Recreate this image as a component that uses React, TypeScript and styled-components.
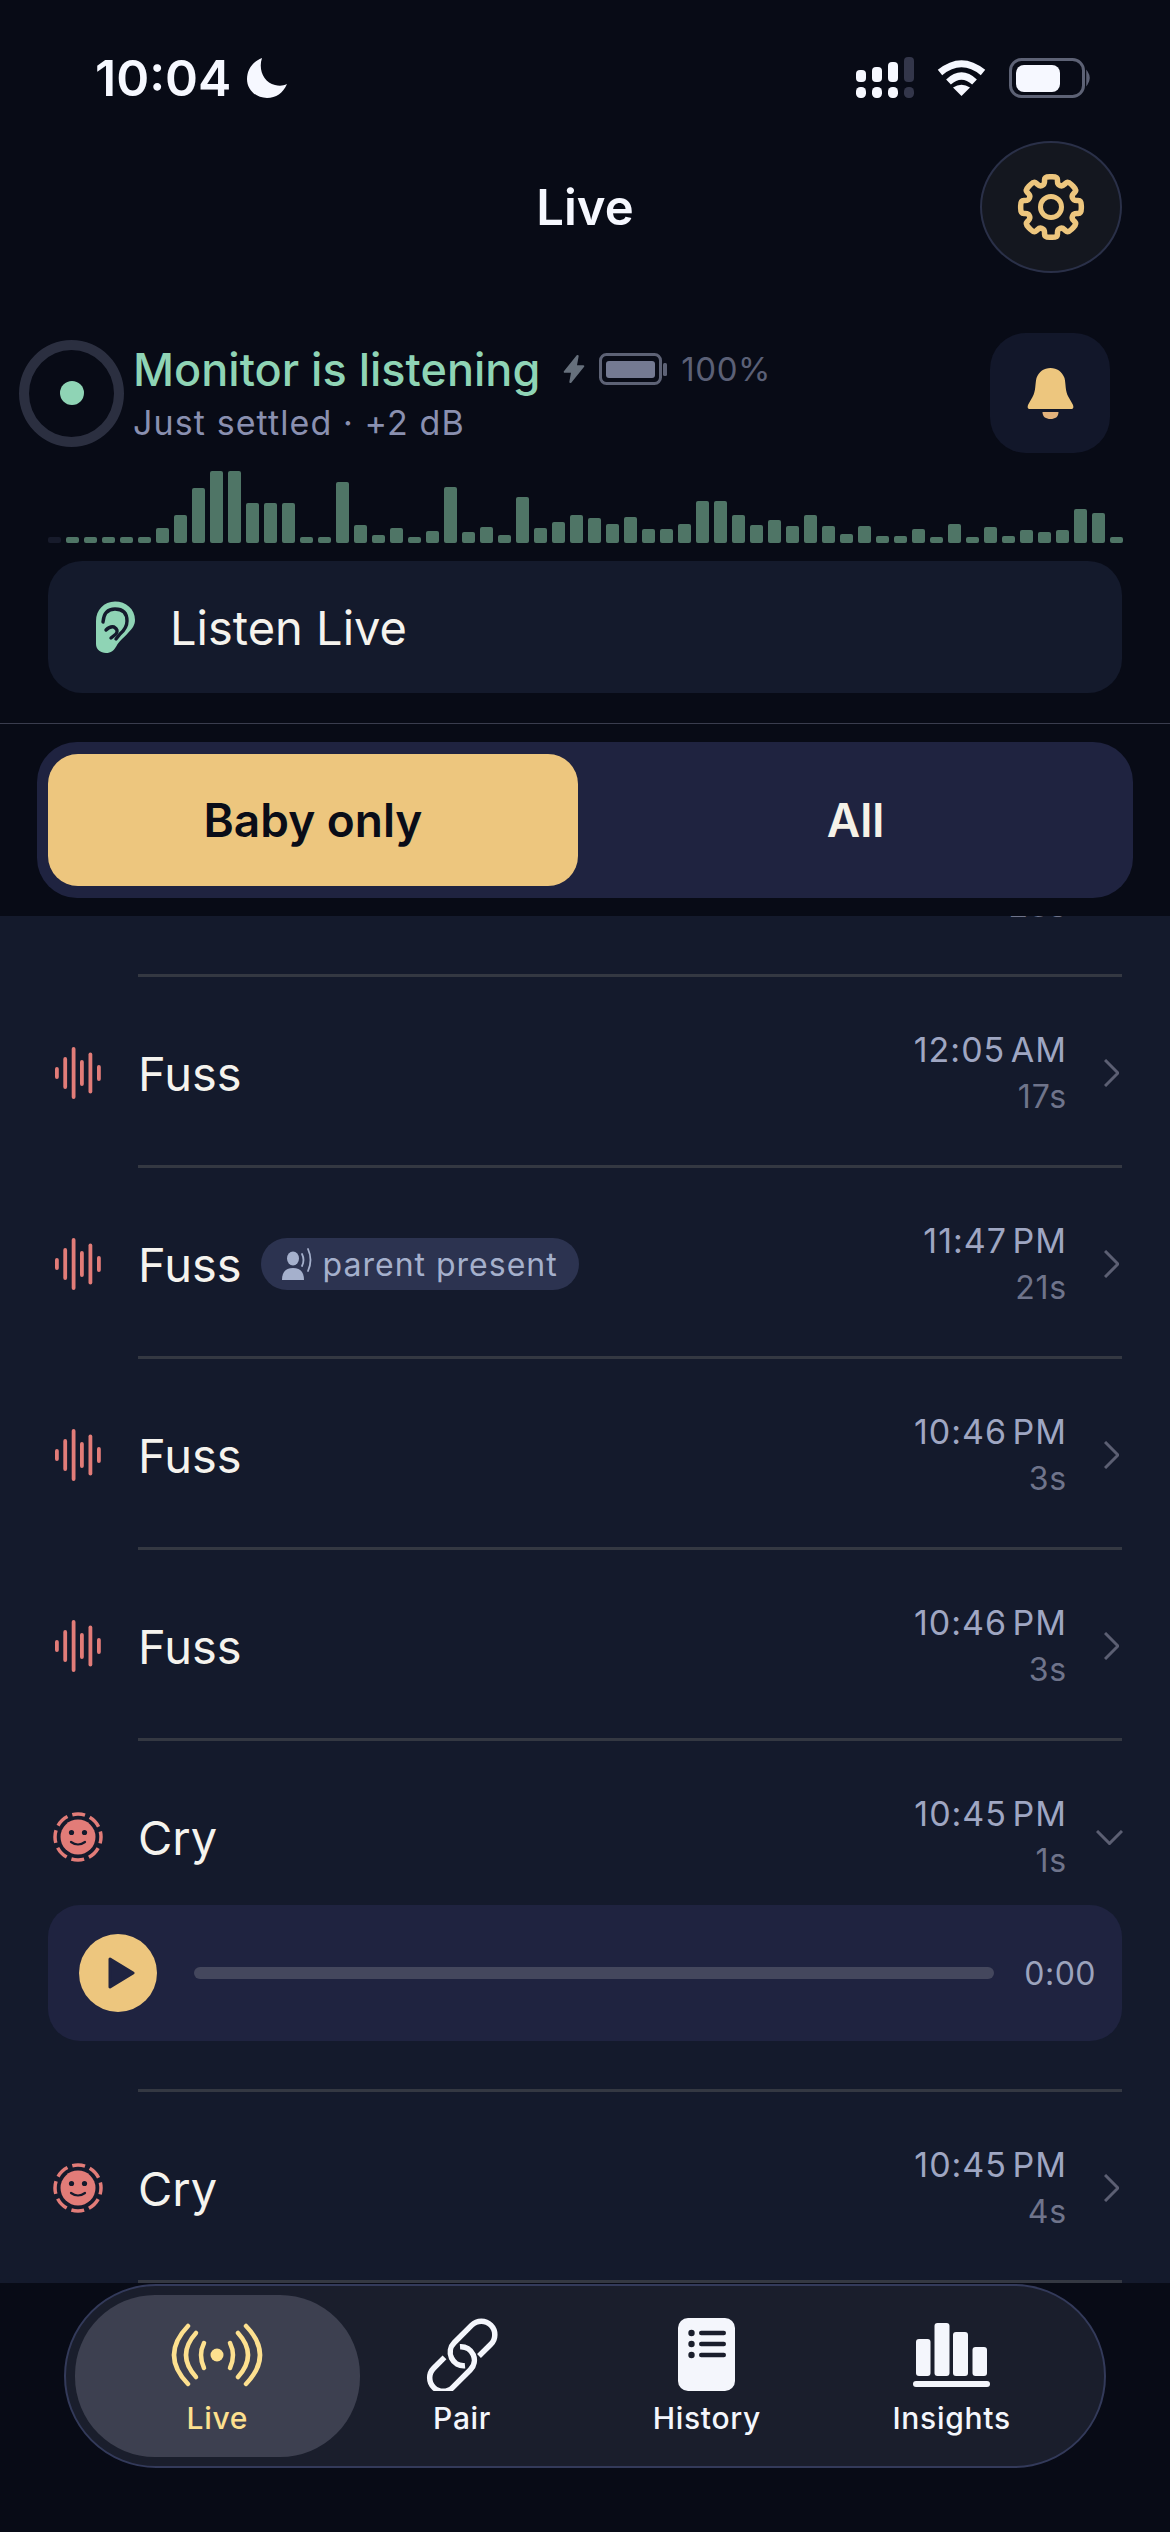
import React from "react";
import styled, { createGlobalStyle } from "styled-components";
import { IoFlash } from "react-icons/io5";

const Global = createGlobalStyle`
  html, body { margin: 0; padding: 0; background: #080b16; }
  * { box-sizing: border-box; }
  body { font-family: Inter, "Noto Sans", sans-serif; }
`;

const Page = styled.div`
  width: 1170px;
  height: 2532px;
  display: flex;
  flex-direction: column;
  overflow: hidden;
  background: #080b16;
  color: #f5f3ee;
`;

const StatusBar = styled.div`
  height: 141px;
  padding: 48px 78px 0 95px;
  display: flex;
  justify-content: space-between;
  align-items: flex-start;
`;
const Clock = styled.div`
  display: flex;
  align-items: center;
  gap: 16px;
  height: 60px;
  font-size: 50px;
  font-weight: 600;
  color: #f6f8ff;
`;
const StatusIcons = styled.div`
  display: flex;
  align-items: flex-start;
  margin-top: 9px;
`;
const TitleBar = styled.div`
  height: 132px;
  padding: 0 48px;
  display: grid;
  grid-template-columns: 1fr auto 1fr;
  align-items: center;
`;
const Title = styled.h1`
  grid-column: 2;
  margin: 0;
  font-size: 49px;
  font-weight: 600;
  color: #f6f8ff;
`;
const GearButton = styled.div`
  grid-column: 3;
  justify-self: end;
  width: 142px;
  height: 132px;
  border-radius: 50%;
  background: #14171f;
  border: 2px solid #2a3048;
  display: flex;
  align-items: center;
  justify-content: center;
`;
const MonitorRow = styled.div`
  margin-top: 60px;
  height: 120px;
  padding: 0 60px 0 19px;
  display: flex;
  align-items: center;
`;
const Ring = styled.div`
  width: 105px;
  height: 107px;
  border-radius: 50%;
  border: 10px solid #2b2f40;
  display: flex;
  align-items: center;
  justify-content: center;
  flex: none;
`;
const Dot = styled.div`
  width: 24px;
  height: 24px;
  border-radius: 50%;
  background: #8fd4b5;
`;
const MonitorText = styled.div`
  flex: 1;
  margin-left: 9px;
  padding-top: 6px;
`;
const MonitorTop = styled.div`
  display: flex;
  align-items: center;
  height: 54px;
`;
const MonitorTitle = styled.span`
  font-size: 45px;
  font-weight: 500;
  color: #8fd4b5;
`;
const BoltWrap = styled.span`
  display: flex;
  margin-left: 19px;
  color: #66707c;
`;
const BatteryWrap = styled.span`
  display: flex;
  margin-left: 10px;
`;
const Percent = styled.span`
  margin-left: 14px;
  font-size: 33px;
  letter-spacing: 0.6px;
  color: #5b6076;
`;
const MonitorSub = styled.div`
  font-size: 34px;
  letter-spacing: 1.1px;
  line-height: 54px;
  color: #8a90b0;
`;
const BellButton = styled.div`
  width: 120px;
  height: 120px;
  border-radius: 36px;
  background: #12172a;
  display: flex;
  align-items: center;
  justify-content: center;
`;
const Meter = styled.div`
  height: 90px;
  padding: 0 48px;
  display: flex;
  align-items: flex-end;
  gap: 5px;
`;
const MeterBar = styled.div<{ $dim?: boolean }>`
  width: 13px;
  flex: none;
  border-radius: 2px;
  background: ${(p) => (p.$dim ? "#171b2b" : "#4f7566")};
`;
const ListenCard = styled.div`
  margin: 18px 48px 0;
  height: 132px;
  border-radius: 34px;
  background: #141a2c;
  display: flex;
  align-items: center;
  padding-left: 48px;
`;
const ListenLabel = styled.span`
  margin-left: 35px;
  font-size: 47px;
  color: #f5f3ee;
`;
const HeaderRule = styled.div`
  margin-top: 30px;
  height: 1px;
  background: #3a3d4e;
`;
const Segmented = styled.div`
  margin: 18px 37px 18px;
  height: 156px;
  padding: 12px 0 12px 11px;
  border-radius: 40px;
  background: #1f2340;
  display: grid;
  grid-template-columns: 530px 1fr;
`;
const Segment = styled.div<{ $on?: boolean }>`
  display: flex;
  align-items: center;
  justify-content: center;
  border-radius: 30px;
  font-size: 46px;
  font-weight: 600;
  background: ${(p) => (p.$on ? "#edc67e" : "transparent")};
  color: ${(p) => (p.$on ? "#0a0d18" : "#f5f1e8")};
`;
const List = styled.div`
  flex: 1;
  min-height: 0;
  overflow: hidden;
  background: #141a2c;
  > :first-child {
    margin-top: -130px;
  }
`;
const Row = styled.div<{ $open?: boolean }>`
  height: 188px;
  padding: 4px 48px 0;
  display: flex;
  align-items: center;
  margin-bottom: ${(p) => (p.$open ? "-24px" : "0")};
`;
const RowIcon = styled.div`
  width: 60px;
  flex: none;
  display: flex;
  justify-content: center;
`;
const RowMain = styled.div`
  flex: 1;
  margin-left: 30px;
  display: flex;
  align-items: center;
  gap: 19px;
`;
const RowLabel = styled.span`
  font-size: 47px;
  color: #f5f3ee;
`;
const Badge = styled.span`
  height: 52px;
  padding: 0 21px;
  border-radius: 26px;
  background: #2c3350;
  display: flex;
  align-items: center;
  gap: 10px;
  font-size: 32px;
  letter-spacing: 1px;
  color: #a5b0cc;
`;
const TimeBlock = styled.div`
  text-align: right;
  margin-right: -1px;
`;
const TimeLine = styled.div`
  font-size: 34px;
  line-height: 46px;
  letter-spacing: 1px;
  word-spacing: -5px;
  color: #9fa6c2;
`;
const Duration = styled.div`
  margin-top: 1px;
  font-size: 32px;
  line-height: 46px;
  letter-spacing: 0.8px;
  color: #6f748b;
`;
const ChevronSlot = styled.div<{ $open?: boolean }>`
  flex: none;
  display: flex;
  justify-content: flex-end;
  margin-right: ${(p) => (p.$open ? "-1px" : "3px")};
  width: ${(p) => (p.$open ? "57px" : "53px")};
`;
const Rule = styled.div`
  height: 3px;
  margin: 0 48px 0 138px;
  background: #343842;
`;
const Player = styled.div`
  margin: 0 48px 48px;
  height: 136px;
  border-radius: 32px;
  background: #1f2340;
  display: flex;
  align-items: center;
  padding: 0 26px 0 31px;
`;
const PlayButton = styled.div`
  width: 78px;
  height: 78px;
  flex: none;
  border-radius: 50%;
  background: #edc67e;
  display: flex;
  align-items: center;
  justify-content: center;
`;
const Track = styled.div`
  flex: 1;
  height: 12px;
  margin: 0 30px 0 37px;
  border-radius: 6px;
  background: #44475d;
`;
const PlayTime = styled.span`
  font-size: 32px;
  letter-spacing: 0.5px;
  color: #9ca3bd;
`;
const TabArea = styled.div`
  height: 249px;
  flex: none;
  padding: 1px 64px 0;
  background: #080b16;
`;
const TabPill = styled.nav`
  height: 184px;
  border-radius: 92px;
  background: #1a1e2c;
  border: 2px solid #333a5a;
  padding: 9px 30px 9px 29px;
  display: grid;
  grid-template-columns: repeat(4, 1fr);
`;
const Tab = styled.div<{ $on?: boolean }>`
  display: flex;
  flex-direction: column;
  align-items: center;
  padding-top: 23px;
  border-radius: 80px;
  margin: ${(p) => (p.$on ? "0 -20px" : "0")};
  background: ${(p) => (p.$on ? "#3d4050" : "transparent")};
  color: ${(p) => (p.$on ? "#fde08f" : "#f4f6fc")};
`;
const TabIcon = styled.div`
  height: 73px;
  display: flex;
  align-items: center;
  justify-content: center;
`;
const TabLabel = styled.span`
  margin-top: 9px;
  font-size: 30px;
  line-height: 36px;
  font-weight: 500;
  letter-spacing: 0.7px;
`;

const meterTops = [711,711,711,711,711,711,684,645,564,513,513,609,609,609,711,711,546,675,705,684,711,693,561,696,681,705,591,684,666,645,654,672,651,687,687,672,603,603,645,675,660,678,645,678,702,678,708,708,687,711,672,711,681,708,690,696,690,627,639,711];

const cogPath = (() => {
  const C = 37;
  const pts: [number, number][] = [];
  const at = (deg: number, r: number): [number, number] => {
    const t = (deg * Math.PI) / 180;
    return [C + r * Math.cos(t), C + r * Math.sin(t)];
  };
  for (let i = 0; i < 8; i++) {
    const a = i * 45 - 90;
    pts.push(at(a - 16, 23.5), at(a - 12, 31), at(a + 12, 31), at(a + 16, 23.5));
  }
  const mix = (p: number[], q: number[], f: number) =>
    `${(p[0] + (q[0] - p[0]) * f).toFixed(2)} ${(p[1] + (q[1] - p[1]) * f).toFixed(2)}`;
  const n = pts.length;
  let d = `M${mix(pts[n - 1], pts[0], 0.6)}`;
  for (let i = 0; i < n; i++) {
    const p = pts[i];
    const nx = pts[(i + 1) % n];
    d += ` Q${p[0].toFixed(2)} ${p[1].toFixed(2)} ${mix(p, nx, 0.4)} L${mix(p, nx, 0.6)}`;
  }
  return d + " Z";
})();

const Cog = () => (
  <svg width="74" height="74" viewBox="0 0 74 74">
    <g fill="none" stroke="#edc67e" strokeWidth="5.500">
      <path d={cogPath} strokeLinejoin="round" />
      <circle cx="37" cy="37" r="10.500" strokeWidth="5" />
    </g>
  </svg>
);
const Bell = () => (
  <svg width="47" height="51" viewBox="0 0 47 51">
    <path
      d="M23.500 0 C17 0 12 3.500 9.500 10 C8 16 9 23 5.500 29 L1.500 36 C0 39 0.500 41 3 41 L44 41 C46.500 41 47 39 45.500 36 L41.500 29 C38 23 39 16 37.500 10 C35 3.500 30 0 23.500 0 Z"
      fill="#edc67e"
    />
    <path d="M15.500 44 L31.500 44 C31.500 49 28 51 23.500 51 C19 51 15.500 49 15.500 44 Z" fill="#e2b27c" />
  </svg>
);
const Ear = () => (
  <svg width="39" height="52" viewBox="0 0 39 52">
    <path
      d="M19 0.500 C8 0.500 0 9 0 20 L0 43 C0 48.500 4.500 52 10 52 C15 52 18 49.500 20.500 45 C23 40 27 37.500 32 32 C36.500 27.500 39 24 39 19 C39 8 30 0.500 19 0.500 Z"
      fill="#8fd4b5"
    />
    <g fill="none" stroke="#141a2c" strokeWidth="3.400" strokeLinecap="round" strokeLinejoin="round">
      <path d="M7 21 Q8 8 19 8 Q31 8 31 20 Q31 27 24 33 L20 38" />
      <path d="M10 29 Q14 25 18 26 Q23 29 20 33 L15 37" />
    </g>
  </svg>
);
const Signal = () => (
  <svg width="58" height="41" viewBox="0 0 58 41">
    <g fill="#f6f8ff">
      <rect x="0" y="13" width="10" height="12" rx="4" />
      <rect x="16" y="10" width="10" height="15" rx="4" />
      <rect x="32" y="5" width="10" height="20" rx="4" />
      <rect x="0" y="30" width="10" height="11" rx="4.500" />
      <rect x="16" y="30" width="10" height="11" rx="4.500" />
      <rect x="32" y="30" width="10" height="11" rx="4.500" />
    </g>
    <rect x="48" y="0" width="10" height="25" rx="4" fill="#33364a" />
    <rect x="48" y="30" width="10" height="11" rx="4.500" fill="#33364a" />
  </svg>
);
const WifiSvg = styled.svg`
  margin: 2px 0 0 23px;
`;
const BatterySvg = styled.svg`
  margin: 1px 0 0 23px;
`;
const Wifi = () => (
  <WifiSvg width="49" height="38" viewBox="0 0 49 38">
    <g fill="none" stroke="#f6f8ff" strokeWidth="7">
      <path d="M3 13.500 Q24.500 -4 46 13.500" />
      <path d="M11.500 23 Q24.500 11 37.500 23" />
    </g>
    <path d="M24.500 37 L16 28.500 Q24.500 23 33 28.500 Z" fill="#f6f8ff" />
  </WifiSvg>
);
const Battery = () => (
  <BatterySvg width="83" height="40" viewBox="0 0 83 40">
    <rect x="1.500" y="1.500" width="73" height="37" rx="11" fill="none" stroke="#5d6275" strokeWidth="3" />
    <rect x="7" y="7" width="44" height="27" rx="8" fill="#f6f8ff" />
    <path d="M78 14 Q82 20 78 26 Z" fill="#5d6275" stroke="#5d6275" strokeWidth="1.500" />
  </BatterySvg>
);
const Moon = () => (
  <svg width="40" height="40" viewBox="0 0 40 40">
    <path d="M15 0 C5 4 0 12 0 21 C0 32 9 40 20 40 C29 40 36 35 40 26 C36 28 32 28 28 27 C17 25 11 12 15 0 Z" fill="#f6f8ff" />
  </svg>
);
const MiniBattery = () => (
  <svg width="68" height="32" viewBox="0 0 68 32">
    <rect x="1.500" y="1.500" width="60" height="29" rx="6" fill="none" stroke="#5d6275" strokeWidth="3" />
    <rect x="7" y="8" width="49" height="17" rx="3" fill="#747a92" />
    <rect x="64" y="10" width="4" height="13" rx="1.500" fill="#5d6275" />
  </svg>
);
const FussIcon = () => (
  <svg width="46" height="52" viewBox="0 0 46 52">
    <g fill="#e27c78">
      {[[0, 12], [8.300, 32], [16.700, 52], [25, 26], [33.500, 41], [42, 16]].map(([x, h]) => (
        <rect key={x} x={x} y={26 - h / 2} width="3.800" height={h} rx="1.900" />
      ))}
    </g>
  </svg>
);
const CryIcon = () => (
  <svg width="50" height="50" viewBox="0 0 50 50">
    <circle cx="25" cy="25" r="23" fill="none" stroke="#e27c78" strokeWidth="3.500" strokeDasharray="13 5.060" strokeDashoffset="6.500" />
    <circle cx="25" cy="25" r="17.500" fill="#e27c78" />
    <circle cx="18.500" cy="20.500" r="2.600" fill="#141a2c" />
    <circle cx="31.500" cy="20.500" r="2.600" fill="#141a2c" />
    <path d="M18 30 Q25 35 32 30" fill="none" stroke="#141a2c" strokeWidth="2.200" strokeLinecap="round" />
  </svg>
);
const PersonIcon = () => (
  <svg width="31" height="33" viewBox="0 0 31 33">
    <ellipse cx="11" cy="10.500" rx="6" ry="7" fill="#a5b0cc" />
    <path d="M0 32 Q0 20 11 20 Q22 20 22 32 Z" fill="#a5b0cc" />
    <g fill="none" stroke="#a5b0cc" strokeWidth="1.800" strokeLinecap="round">
      <path d="M20 6 Q23 12 20 18" />
      <path d="M26 1 Q31 12 26 23" />
    </g>
  </svg>
);
const ChevronRight = () => (
  <svg width="15" height="28" viewBox="0 0 15 28">
    <path d="M1 1 L14 14 L1 27" fill="none" stroke="#5c5f73" strokeWidth="3" />
  </svg>
);
const ChevronDown = () => (
  <svg width="27" height="15" viewBox="0 0 27 15">
    <path d="M1 1 L13.500 13.500 L26 1" fill="none" stroke="#5c5f73" strokeWidth="3" />
  </svg>
);
const PlaySvg = styled.svg`
  margin-left: 6px;
`;
const PlayGlyph = () => (
  <PlaySvg width="27" height="32" viewBox="0 0 27 32">
    <path d="M2 2 L25 16 L2 30 Z" fill="#1f2340" stroke="#1f2340" strokeWidth="3" strokeLinejoin="round" />
  </PlaySvg>
);
const Waves = () => (
  <svg width="92" height="64" viewBox="0 0 92 64">
    <circle cx="46" cy="32" r="6.500" fill="currentColor" />
    <g fill="none" stroke="currentColor" strokeWidth="4.500" strokeLinecap="round">
      <path d="M33 20 Q27 32 33 45" />
      <path d="M59 20 Q65 32 59 45" />
      <path d="M25 10 Q5 32 25 54" />
      <path d="M67 10 Q87 32 67 54" />
      <path d="M17 3 Q-11 32 17 61" />
      <path d="M75 3 Q103 32 75 61" />
    </g>
  </svg>
);
const LinkIcon = () => (
  <svg width="72" height="73" viewBox="0 0 72 73">
    <g fill="none" stroke="currentColor" strokeWidth="5.500">
      <path d="M53 38 L64.850 26.250 A13.500 13.500 0 0 0 45.750 7.150 L28.150 24.750 A13.500 13.500 0 0 0 39 47.700" />
      <path d="M18.500 39.400 L7.650 50.250 A13.500 13.500 0 0 0 26.750 69.350 L44.350 51.750 A13.500 13.500 0 0 0 34 28.700" />
    </g>
  </svg>
);
const DocIcon = () => (
  <svg width="57" height="73" viewBox="0 0 57 73">
    <rect width="57" height="73" rx="10" fill="#f4f6fc" />
    <g fill="#1a1e2c">
      {[15, 26, 37].map((y) => (
        <React.Fragment key={y}>
          <circle cx="13.500" cy={y} r="3.200" />
          <rect x="21" y={y - 2.200} width="27" height="4.400" rx="2.200" />
        </React.Fragment>
      ))}
    </g>
  </svg>
);
const BarsIcon = () => (
  <svg width="77" height="64" viewBox="0 0 77 64">
    <g fill="#f4f6fc">
      <rect x="3" y="16" width="14.500" height="37" rx="3" />
      <rect x="21.500" y="0" width="15" height="53" rx="3" />
      <rect x="40" y="9" width="15" height="44" rx="3" />
      <rect x="59.500" y="24" width="14.500" height="29" rx="3" />
      <rect x="0" y="58" width="77" height="6" rx="3" />
    </g>
  </svg>
);

type Ev = { icon: React.FC; label: string; time: string; dur: string; badge?: boolean; open?: boolean };
const events: Ev[] = [
  { icon: FussIcon, label: "Fuss", time: "12:05 AM", dur: "17s" },
  { icon: FussIcon, label: "Fuss", time: "11:47 PM", dur: "21s", badge: true },
  { icon: FussIcon, label: "Fuss", time: "10:46 PM", dur: "3s" },
  { icon: FussIcon, label: "Fuss", time: "10:46 PM", dur: "3s" },
  { icon: CryIcon, label: "Cry", time: "10:45 PM", dur: "1s", open: true },
  { icon: CryIcon, label: "Cry", time: "10:45 PM", dur: "4s" },
];

export default function App() {
  return (
    <Page>
      <Global />
      <StatusBar>
        <Clock>
          10:04
          <Moon />
        </Clock>
        <StatusIcons>
          <Signal />
          <Wifi />
          <Battery />
        </StatusIcons>
      </StatusBar>
      <TitleBar>
        <Title>Live</Title>
        <GearButton>
          <Cog />
        </GearButton>
      </TitleBar>
      <MonitorRow>
        <Ring>
          <Dot />
        </Ring>
        <MonitorText>
          <MonitorTop>
            <MonitorTitle>Monitor is listening</MonitorTitle>
            <BoltWrap>
              <IoFlash size={30} />
            </BoltWrap>
            <BatteryWrap>
              <MiniBattery />
            </BatteryWrap>
            <Percent>100%</Percent>
          </MonitorTop>
          <MonitorSub>Just settled · +2 dB</MonitorSub>
        </MonitorText>
        <BellButton>
          <Bell />
        </BellButton>
      </MonitorRow>
      <Meter>
        {meterTops.map((t, i) => (
          <MeterBar key={i} $dim={i === 0} style={{ height: (728 - t) / 3 }} />
        ))}
      </Meter>
      <ListenCard>
        <Ear />
        <ListenLabel>Listen Live</ListenLabel>
      </ListenCard>
      <HeaderRule />
      <Segmented>
        <Segment $on>Baby only</Segment>
        <Segment>All</Segment>
      </Segmented>
      <List>
        <Row>
          <RowIcon />
          <RowMain />
          <TimeBlock>
            <TimeLine>&nbsp;</TimeLine>
            <Duration>23s</Duration>
          </TimeBlock>
          <ChevronSlot />
        </Row>
        <Rule />
        {events.map((e, i) => (
          <React.Fragment key={i}>
            <Row $open={e.open}>
              <RowIcon>
                <e.icon />
              </RowIcon>
              <RowMain>
                <RowLabel>{e.label}</RowLabel>
                {e.badge && (
                  <Badge>
                    <PersonIcon />
                    parent present
                  </Badge>
                )}
              </RowMain>
              <TimeBlock>
                <TimeLine>{e.time}</TimeLine>
                <Duration>{e.dur}</Duration>
              </TimeBlock>
              <ChevronSlot $open={e.open}>{e.open ? <ChevronDown /> : <ChevronRight />}</ChevronSlot>
            </Row>
            {e.open && (
              <Player>
                <PlayButton>
                  <PlayGlyph />
                </PlayButton>
                <Track />
                <PlayTime>0:00</PlayTime>
              </Player>
            )}
            <Rule />
          </React.Fragment>
        ))}
      </List>
      <TabArea>
        <TabPill>
          <Tab $on>
            <TabIcon>
              <Waves />
            </TabIcon>
            <TabLabel>Live</TabLabel>
          </Tab>
          <Tab>
            <TabIcon>
              <LinkIcon />
            </TabIcon>
            <TabLabel>Pair</TabLabel>
          </Tab>
          <Tab>
            <TabIcon>
              <DocIcon />
            </TabIcon>
            <TabLabel>History</TabLabel>
          </Tab>
          <Tab>
            <TabIcon>
              <BarsIcon />
            </TabIcon>
            <TabLabel>Insights</TabLabel>
          </Tab>
        </TabPill>
      </TabArea>
    </Page>
  );
}
